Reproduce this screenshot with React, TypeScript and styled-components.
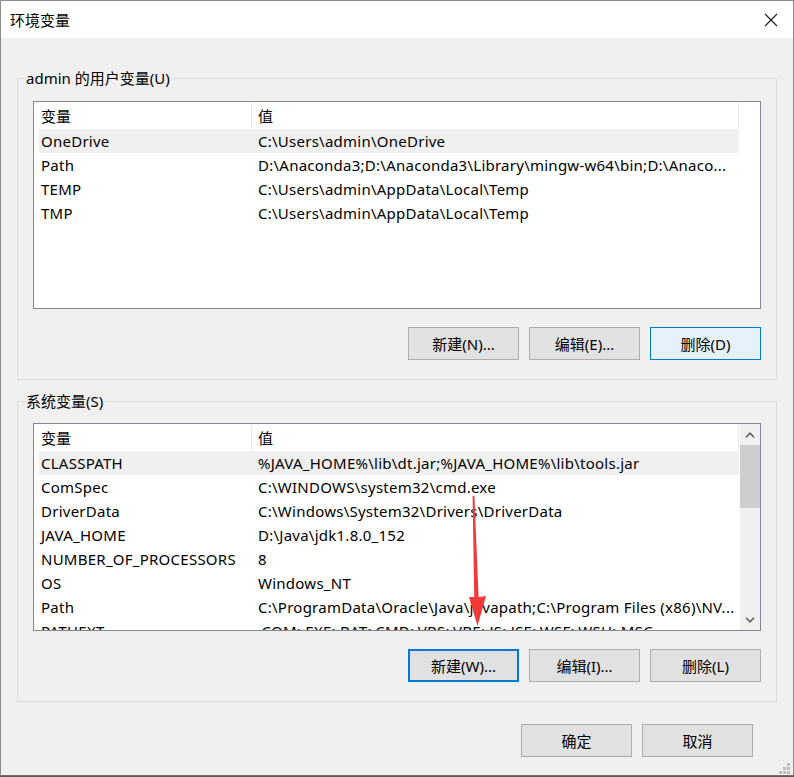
import React from 'react'
import styled, { createGlobalStyle } from 'styled-components'

const GlobalStyle = createGlobalStyle`
  html, body {
    margin: 0;
    padding: 0;
  }
  body {
    background: #5b5b5b;
    font-family: "Noto Sans", "Noto Sans CJK SC", sans-serif;
  }
`

const Window = styled.div`
  position: relative;
  width: 794px;
  height: 776px;
  box-sizing: border-box;
  border: 1px solid #8c8c8c;
  border-bottom-color: #6f6f6f;
  background: #f0f0f0;
  display: flex;
  flex-direction: column;
  font-size: 15px;
  color: #000;
  overflow: hidden;
`

const TitleBar = styled.div`
  height: 37px;
  flex: none;
  background: #fff;
  display: flex;
  align-items: center;
  justify-content: space-between;
  padding-left: 9px;
`

const Title = styled.span`
  line-height: 20px;
`

const CloseButton = styled.div`
  width: 44px;
  height: 37px;
  display: flex;
  align-items: center;
  justify-content: center;
`

const Content = styled.div`
  flex: 1;
  padding: 30px 16px 0;
  display: flex;
  flex-direction: column;
`

const Group = styled.fieldset<{ $gap: number; $top: number }>`
  margin: ${(p) => p.$gap}px 0 0;
  border: 1px solid #dcdcdc;
  padding: ${(p) => p.$top}px 15px 19px;
  min-width: 0;
`

const Legend = styled.legend`
  padding: 0 1px;
  margin-left: -8px;
  line-height: 20px;
  height: 20px;
`

const ListBox = styled.div`
  height: 208px;
  box-sizing: border-box;
  border: 1px solid #828790;
  background: #fff;
  display: flex;
  overflow: hidden;
`

const ListBody = styled.div`
  width: 705px;
  flex: none;
  overflow: hidden;
`

const HeaderRow = styled.div`
  display: grid;
  grid-template-columns: 218px 487px;
  height: 27px;
`

const HeaderCell = styled.div<{ $pad: number }>`
  padding-left: ${(p) => p.$pad}px;
  line-height: 26px;
  box-sizing: border-box;
  border-right: 1px solid #e5e5e5;
  margin-top: 1px;
  height: 25px;
`

const Row = styled.div<{ $selected?: boolean }>`
  display: grid;
  grid-template-columns: 213px 487px;
  width: 700px;
  margin-left: 5px;
  height: 24px;
  line-height: 24px;
  letter-spacing: 0.25px;
  background: ${(p) => (p.$selected ? '#f0f0f0' : 'transparent')};
`

const Cell = styled.div<{ $pad: number }>`
  padding-left: ${(p) => p.$pad}px;
  white-space: nowrap;
  overflow: hidden;
`

const Filler = styled.div`
  flex: 1;
`

const ScrollBar = styled.div`
  width: 20px;
  flex: none;
  background: #f0f0f0;
  display: flex;
  flex-direction: column;
`

const ScrollArrow = styled.div`
  height: 21px;
  flex: none;
  display: flex;
  align-items: center;
  justify-content: center;
`

const ScrollThumb = styled.div`
  height: 63px;
  flex: none;
  background: #cdcdcd;
`

const ScrollTrack = styled.div`
  flex: 1;
`

const ButtonRow = styled.div<{ $top: number; $right: number }>`
  display: flex;
  justify-content: flex-end;
  gap: 10px;
  margin-top: ${(p) => p.$top}px;
  padding-right: ${(p) => p.$right}px;
`

const Button = styled.div<{ $state?: 'hover' | 'focus' }>`
  width: 111px;
  height: 33px;
  box-sizing: border-box;
  display: flex;
  align-items: center;
  justify-content: center;
  background: ${(p) => (p.$state === 'hover' ? '#e5f1fb' : '#e1e1e1')};
  border: ${(p) =>
    p.$state === 'focus'
      ? '2px solid #0078d7'
      : p.$state === 'hover'
        ? '1px solid #0078d7'
        : '1px solid #adadad'};
  line-height: 20px;
`

const Overlay = styled.svg`
  position: absolute;
  left: -1px;
  top: -1px;
  width: 794px;
  height: 777px;
  pointer-events: none;
`

type Variable = [string, string]

const userVars: Variable[] = [
  ['OneDrive', 'C:\\Users\\admin\\OneDrive'],
  ['Path', 'D:\\Anaconda3;D:\\Anaconda3\\Library\\mingw-w64\\bin;D:\\Anaco...'],
  ['TEMP', 'C:\\Users\\admin\\AppData\\Local\\Temp'],
  ['TMP', 'C:\\Users\\admin\\AppData\\Local\\Temp'],
]

const systemVars: Variable[] = [
  ['CLASSPATH', '%JAVA_HOME%\\lib\\dt.jar;%JAVA_HOME%\\lib\\tools.jar'],
  ['ComSpec', 'C:\\WINDOWS\\system32\\cmd.exe'],
  ['DriverData', 'C:\\Windows\\System32\\Drivers\\DriverData'],
  ['JAVA_HOME', 'D:\\Java\\jdk1.8.0_152'],
  ['NUMBER_OF_PROCESSORS', '8'],
  ['OS', 'Windows_NT'],
  ['Path', 'C:\\ProgramData\\Oracle\\Java\\javapath;C:\\Program Files (x86)\\NV...'],
  ['PATHEXT', '.COM;.EXE;.BAT;.CMD;.VBS;.VBE;.JS;.JSE;.WSF;.WSH;.MSC'],
]

function Chevron({ up }: { up?: boolean }) {
  return (
    <svg width="10" height="6" viewBox="0 0 10 6">
      <path
        d={up ? 'M1 5.2 L5 1.2 L9 5.2' : 'M1 0.8 L5 4.8 L9 0.8'}
        fill="none"
        stroke="#606060"
        strokeWidth="1.6"
      />
    </svg>
  )
}

function VariableList({ items, scroll }: { items: Variable[]; scroll?: boolean }) {
  return (
    <ListBox>
      <ListBody>
        <HeaderRow>
          <HeaderCell $pad={7}>变量</HeaderCell>
          <HeaderCell $pad={6}>值</HeaderCell>
        </HeaderRow>
        {items.map(([name, value], i) => (
          <Row key={name + i} $selected={i === 0}>
            <Cell $pad={2}>{name}</Cell>
            <Cell $pad={6}>{value}</Cell>
          </Row>
        ))}
      </ListBody>
      <Filler />
      {scroll && (
        <ScrollBar>
          <ScrollArrow>
            <Chevron up />
          </ScrollArrow>
          <ScrollThumb />
          <ScrollTrack />
          <ScrollArrow>
            <Chevron />
          </ScrollArrow>
        </ScrollBar>
      )}
    </ListBox>
  )
}

export default function App() {
  return (
    <>
      <GlobalStyle />
      <Window>
        <TitleBar>
          <Title>环境变量</Title>
          <CloseButton>
            <svg width="14" height="14" viewBox="0 0 14 14">
              <path d="M1 1 L13 13 M13 1 L1 13" stroke="#1a1a1a" strokeWidth="1.1" />
            </svg>
          </CloseButton>
        </TitleBar>
        <Content>
          <Group $gap={0} $top={13}>
            <Legend>admin 的用户变量(U)</Legend>
            <VariableList items={userVars} />
            <ButtonRow $top={18} $right={0}>
              <Button>新建(N)...</Button>
              <Button>编辑(E)...</Button>
              <Button $state="hover">删除(D)</Button>
            </ButtonRow>
          </Group>
          <Group $gap={11} $top={12}>
            <Legend>系统变量(S)</Legend>
            <VariableList items={systemVars} scroll />
            <ButtonRow $top={18} $right={0}>
              <Button $state="focus">新建(W)...</Button>
              <Button>编辑(I)...</Button>
              <Button>删除(L)</Button>
            </ButtonRow>
          </Group>
          <ButtonRow $top={22} $right={24}>
            <Button>确定</Button>
            <Button>取消</Button>
          </ButtonRow>
        </Content>
        <Overlay viewBox="0 0 794 777">
          <g fill="#bdbdbd">
            <rect x="787" y="763" width="3" height="3" />
            <rect x="783" y="767" width="3" height="3" />
            <rect x="787" y="767" width="3" height="3" />
            <rect x="779" y="771" width="3" height="3" />
            <rect x="783" y="771" width="3" height="3" />
            <rect x="787" y="771" width="3" height="3" />
          </g>
          <polygon
            points="472.6,496 474.4,496 478.6,597 486,596 477.5,626 469,597 474.2,597"
            fill="#f03a3a"
          />
        </Overlay>
      </Window>
    </>
  )
}
